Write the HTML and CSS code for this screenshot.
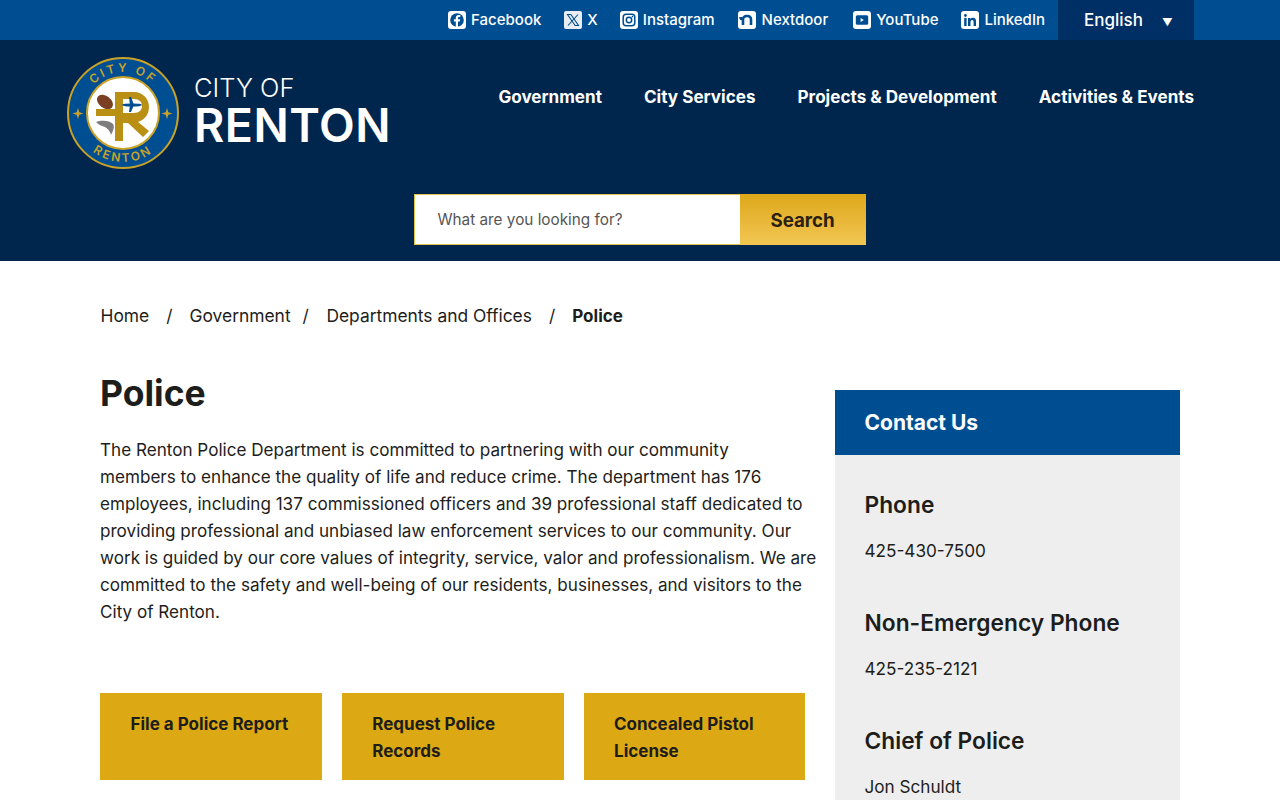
FILE: index.html
```html
<!DOCTYPE html>
<html lang="en">
<head>
<meta charset="utf-8">
<title>Police | City of Renton</title>
<link rel="stylesheet" href="styles.css">
</head>
<body>
<div class="topbar">
  <a class="social"><svg class="sico" viewBox="0 0 18 18"><rect width="18" height="18" rx="3" fill="#fff"/><circle cx="9" cy="9" r="6.800" fill="#004e92"/><path d="M10 16V10.400h1.900l.3-2.200H10V7c0-.7.3-1.100 1.100-1.100h1.200V4c-.3 0-1-.1-1.700-.1-1.700 0-2.800 1-2.800 2.900v1.400H5.900v2.200h1.900V16z" fill="#fff"/></svg>Facebook</a>
  <a class="social social-x"><svg class="sico" viewBox="0 0 18 18"><rect width="18" height="18" rx="2" fill="#e9eef4"/><path d="M3.500 3.500h3.400l7.600 11h-3.400zM14 3.500L4 14.500" fill="none" stroke="#004e92" stroke-width="1.100"/></svg>X</a>
  <a class="social"><svg class="sico" viewBox="0 0 18 18"><rect width="18" height="18" rx="3" fill="#fff"/><rect x="3.200" y="3.200" width="11.600" height="11.600" rx="3" fill="none" stroke="#004e92" stroke-width="1.500"/><circle cx="9" cy="9" r="2.700" fill="none" stroke="#004e92" stroke-width="1.500"/><circle cx="12.400" cy="5.600" r=".8" fill="#004e92"/></svg>Instagram</a>
  <a class="social social-nd"><svg class="sico" viewBox="0 0 18 18"><rect width="18" height="18" rx="3" fill="#fff"/><path d="M2.500 6c0 1.500 1 2.300 2.400 2.300M5 14V8.500C5 6.500 6.500 5 9 5s4 1.500 4 3.500V14" fill="none" stroke="#004e92" stroke-width="2.600"/></svg>Nextdoor</a>
  <a class="social"><svg class="sico" viewBox="0 0 18 18"><rect width="18" height="18" rx="3" fill="#fff"/><rect x="2.800" y="4.200" width="12.400" height="9.600" rx="1.500" fill="#004e92"/><path d="M7.600 7L10.800 9l-3.200 2z" fill="#fff"/></svg>YouTube</a>
  <a class="social"><svg class="sico" viewBox="0 0 18 18"><rect width="18" height="18" rx="3" fill="#fff"/><path d="M3.200 7h2.400v8H3.200zM7 7h2.300v1.200C9.800 7.400 10.700 6.800 12 6.800c2.200 0 3 1.400 3 3.600V15h-2.400v-4.100c0-1.100-.4-1.900-1.400-1.900s-1.700.8-1.700 1.900V15H7z" fill="#004e92"/><circle cx="4.400" cy="4.500" r="1.400" fill="#004e92"/></svg>LinkedIn</a>
  <div class="lang"><span>English</span><span class="caret">▼</span></div>
</div>
<header class="header">
  <div class="headrow">
    <a class="brand">
      <svg class="seal" viewBox="0 0 112 112">
        <circle cx="56" cy="56" r="55" fill="#004e92" stroke="#c9a227" stroke-width="2"/>
        <circle cx="56" cy="56" r="36" fill="#fff" stroke="#c9a227" stroke-width="2"/>
        <defs>
          <path id="arcTop" d="M15 56a41 41 0 0 1 82 0"/>
          <path id="arcBot" d="M7 56a49 49 0 0 0 98 0"/>
        </defs>
        <text class="sealtxt"><textPath href="#arcTop" startOffset="50%" text-anchor="middle">CITY OF</textPath></text>
        <text class="sealtxt"><textPath href="#arcBot" startOffset="50%" text-anchor="middle">RENTON</textPath></text>
        <path d="M11 51l1.300 4.200 4.200 1.300-4.200 1.300L11 62l-1.300-4.200-4.200-1.300 4.200-1.300zM100 51l1.300 4.200 4.200 1.300-4.200 1.300L100 62l-1.300-4.200-4.200-1.300 4.200-1.300z" fill="#c9a227"/>
        <ellipse cx="38" cy="45" rx="9" ry="6" transform="rotate(38 38 45)" fill="#7b3f24"/>
        <path d="M29 65c5-2 13-2 17 2 2 3 0 7-2 11-1-4-3-6-6-8-4-1-7-3-9-5z" fill="#7d7d7d"/>
        <path d="M48 35H67C76 35 82 42 82 50C82 58 77 63 71 65L82 74L76 80L61 66H56V84H48V59H29V52H48Z" fill="#b98f14"/>
        <path d="M56 42H67C72 42 75 45 75 49C75 53 72 56 67 56H56Z" fill="#fff"/>
        <ellipse cx="65" cy="48" rx="10" ry="1.600" fill="#004e92"/>
        <path d="M62 40h2l3 8-3 7h-2l1-7z" fill="#004e92"/>
      </svg>
      <span class="brandtxt"><span class="cityof">CITY OF</span><span class="renton">RENTON</span></span>
    </a>
    <nav class="nav">
      <a>Government</a>
      <a>City Services</a>
      <a>Projects &amp; Development</a>
      <a>Activities &amp; Events</a>
    </nav>
  </div>
  <form class="search">
    <div class="sinput">What are you looking for?</div>
    <div class="sbtn">Search</div>
  </form>
</header>
<main class="page">
  <div class="crumbs">
    <a>Home</a><span class="sep">/</span><a>Government</a><span class="sep sep-tight">/</span><a>Departments and Offices</a><span class="sep">/</span><b>Police</b>
  </div>
  <div class="cols">
    <div class="left">
      <h1>Police</h1>
      <p class="intro">The Renton Police Department is committed to partnering with our community<br>members to enhance the quality of life and reduce crime. The department has 176<br>employees, including 137 commissioned officers and 39 professional staff dedicated to<br>providing professional and unbiased law enforcement services to our community. Our<br>work is guided by our core values of integrity, service, valor and professionalism. We are<br>committed to the safety and well-being of our residents, businesses, and visitors to the<br>City of Renton.</p>
      <div class="cards">
        <a class="card">File a Police Report</a>
        <a class="card">Request Police Records</a>
        <a class="card">Concealed Pistol License</a>
      </div>
    </div>
    <aside class="side">
      <div class="sidehead">Contact Us</div>
      <div class="sidebody">
        <h3>Phone</h3>
        <p>425-430-7500</p>
        <h3>Non-Emergency Phone</h3>
        <p>425-235-2121</p>
        <h3>Chief of Police</h3>
        <p>Jon Schuldt</p>
      </div>
    </aside>
  </div>
</main>
</body>
</html>
```

FILE: styles.css
```css
* { box-sizing: border-box; }
html, body { margin: 0; height: 800px; overflow: hidden; }
body { font-family: "Inter", "Open Sans", sans-serif; color: #1d1d1b; background: #fff; }
a { color: inherit; text-decoration: none; }

.topbar { height: 40px; background: #004e92; color: #fff; display: flex; justify-content: flex-end; align-items: center; padding-right: 86px; }
.social { display: flex; align-items: center; gap: 5px; font-size: 15px; font-weight: 500; margin: 0 23px 2px 0; }
.social-x { margin-right: 22px; }
.social-nd { gap: 6px; margin-right: 25px; }
.sico { width: 18px; height: 18px; flex: none; margin-top: 2px; }
.lang { width: 136px; height: 40px; margin-left: -10px; background: #002f65; display: flex; align-items: center; padding: 0 0 1px 26px; font-size: 17px; font-weight: 500; }
.caret { font-size: 10.500px; margin-left: 19px; margin-top: 5px; }

.header { height: 221px; background: #00264d; color: #fff; padding: 17px 86px 0 67px; display: flex; flex-direction: column; }
.headrow { display: flex; justify-content: space-between; }
.brand { display: flex; align-items: center; gap: 15px; height: 112px; }
.seal { width: 112px; height: 112px; }
.sealtxt { font-size: 12px; fill: #c9a227; letter-spacing: 2.500px; font-weight: 600; }
.brandtxt { display: flex; flex-direction: column; padding-bottom: 4px; }
.cityof { font-size: 25.500px; line-height: 28px; font-weight: 300; }
.renton { font-size: 46.500px; line-height: 46px; font-weight: 600; letter-spacing: .5px; }
.nav { display: flex; gap: 42px; padding-top: 29px; font-size: 17.100px; font-weight: 700; }
.search { display: flex; width: 452px; height: 51px; margin: 25px auto 0; position: relative; left: 9px; }
.sinput { width: 326px; background: #fff; border: 1px solid #e4c04a; border-right: 0; color: #555; font-size: 15.300px; padding: 0 23px; display: flex; align-items: center; }
.sbtn { width: 126px; padding-top: 2px; background: linear-gradient(#dea81a, #f2c654); color: #2a2111; font-size: 18.700px; font-weight: 700; display: flex; align-items: center; justify-content: center; }

.page { padding: 0 100px; }
.crumbs { height: 109px; padding: 43px 0 0 .5px; font-size: 17.400px; display: flex; align-items: flex-start; line-height: 24px; }
.sep { margin: 0 17px; }
.sep-tight { margin: 0 17.500px 0 12px; }
.crumbs b { font-weight: 700; font-size: 17px; }
.cols { display: flex; justify-content: space-between; }
.left { width: 725px; }
h1 { margin: 0; padding-top: 1px; font-size: 35.500px; line-height: 46px; font-weight: 700; }
.intro { margin: 19px 0 0; font-size: 17.100px; line-height: 27px; }
.cards { display: flex; gap: 20px; margin-top: 68px; width: 705.300px; }
.card { flex: 1; height: 87px; background: #dca814; padding: 18px 30.500px; font-size: 17px; line-height: 27px; font-weight: 700; }
.side { width: 345px; margin-top: 20px; }
.sidehead { height: 65px; background: #004e92; color: #fff; font-size: 21px; font-weight: 700; display: flex; align-items: center; padding-left: 29.500px; }
.sidebody { background: #eee; padding: 34px 29.500px; height: 500px; }
.sidebody h3 { margin: 0; font-size: 22.750px; line-height: 32px; font-weight: 600; }
.sidebody p { margin: 18px 0 44px; font-size: 17.150px; line-height: 24px; }
```
